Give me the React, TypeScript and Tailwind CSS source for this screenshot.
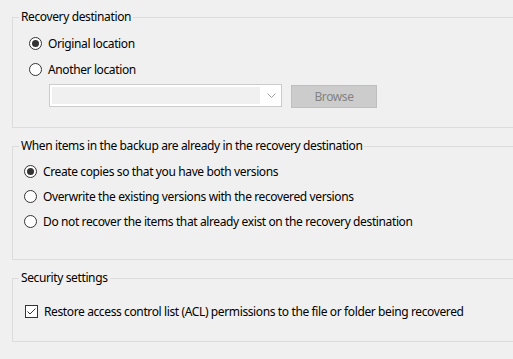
import React from "react";

function Radio({ checked }: { checked?: boolean }) {
  return (
    <span className="flex h-[13px] w-[13px] shrink-0 items-center justify-center rounded-full border border-[#333] bg-white">
      {checked && <span className="h-[7px] w-[7px] rounded-full bg-[#333]" />}
    </span>
  );
}

function Checkbox() {
  return (
    <span className="flex h-[13px] w-[13px] shrink-0 items-center justify-center border border-[#333] bg-white">
      <svg width="11" height="11" viewBox="0 0 11 11">
        <path d="M1.5 5.5 L4 8 L9.5 2.5" fill="none" stroke="#333" strokeWidth="1" />
      </svg>
    </span>
  );
}

function Group({
  title,
  height,
  className,
  children,
}: {
  title: string;
  height: string;
  className?: string;
  children: React.ReactNode;
}) {
  return (
    <div className={`relative ml-[12px] w-[520px] border border-[#dcdcdc] ${height} ${className ?? ""}`}>
      <span className="absolute left-[6px] top-[-9px] bg-[#f0f0f0] px-[2px] leading-[16px]">
        {title}
      </span>
      {children}
    </div>
  );
}

export default function App() {
  return (
    <div
      className="h-[359px] w-[513px] overflow-hidden bg-[#f0f0f0] pt-[17px] text-[12px] tracking-[-0.38px] text-black"
      style={{ fontFamily: '"Segoe UI", "Noto Sans", sans-serif' }}
    >
      {/* Recovery destination */}
      <Group title="Recovery destination" height="h-[111px]">
        <div className="flex flex-col gap-[13px] pl-[16px] pt-[19px]">
          <label className="flex items-center gap-[6px] leading-[13px]">
            <Radio checked />
            Original location
          </label>
          <label className="flex items-center gap-[6px] leading-[13px]">
            <Radio />
            Another location
          </label>
        </div>
        <div className="mt-[8px] flex items-start gap-[9px] pl-[36px]">
          <div className="flex h-[23px] w-[233px] items-center border border-[#cccccc] bg-white p-[2px]">
            <div className="h-full w-[208px] bg-[#f0f0f0]" />
            <svg className="ml-[7px]" width="9" height="6" viewBox="0 0 9 6">
              <path d="M0.5 0.5 L4.5 4.5 L8.5 0.5" fill="none" stroke="#a0a0a0" strokeWidth="1" />
            </svg>
          </div>
          <button className="mt-[1px] h-[23px] w-[86px] border border-[#bfbfbf] bg-[#cccccc] text-[#838383]">
            Browse
          </button>
        </div>
      </Group>

      {/* When items already exist */}
      <Group
        title="When items in the backup are already in the recovery destination"
        height="h-[114px]"
        className="mt-[18px]"
      >
        <div className="flex flex-col gap-[12px] pl-[11px] pt-[18px]">
          <label className="flex items-center gap-[6px] leading-[13px]">
            <Radio checked />
            Create copies so that you have both versions
          </label>
          <label className="flex items-center gap-[6px] leading-[13px]">
            <Radio />
            Overwrite the existing versions with the recovered versions
          </label>
          <label className="flex items-center gap-[6px] leading-[13px]">
            <Radio />
            Do not recover the items that already exist on the recovery destination
          </label>
        </div>
      </Group>

      {/* Security settings */}
      <Group title="Security settings" height="h-[64px]" className="mt-[18px]">
        <div className="pl-[12px] pt-[26px]">
          <label className="flex items-center gap-[6px] leading-[13px]">
            <Checkbox />
            Restore access control list (ACL) permissions to the file or folder being recovered
          </label>
        </div>
      </Group>
    </div>
  );
}
